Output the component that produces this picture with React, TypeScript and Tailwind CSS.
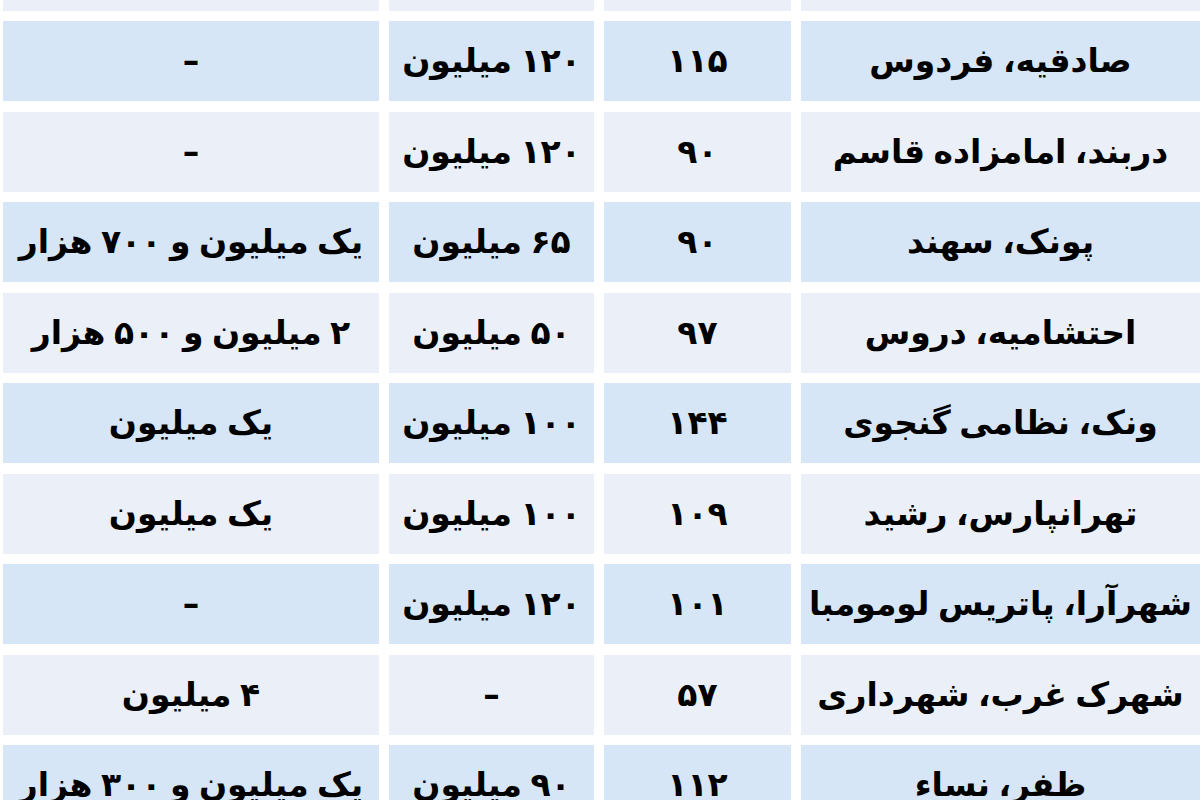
import React from 'react';

type Row = { place: string; area: string; deposit: string; rent: string };

const rows: Row[] = [
    { place: '', area: '', deposit: '', rent: '' },
    { place: 'صادقیه، فردوس', area: '۱۱۵', deposit: '۱۲۰ میلیون', rent: '–' },
    { place: 'دربند، امامزاده قاسم', area: '۹۰', deposit: '۱۲۰ میلیون', rent: '–' },
    { place: 'پونک، سهند', area: '۹۰', deposit: '۶۵ میلیون', rent: 'یک میلیون و ۷۰۰ هزار' },
    { place: 'احتشامیه، دروس', area: '۹۷', deposit: '۵۰ میلیون', rent: '۲ میلیون و ۵۰۰ هزار' },
    { place: 'ونک، نظامی گنجوی', area: '۱۴۴', deposit: '۱۰۰ میلیون', rent: 'یک میلیون' },
    { place: 'تهرانپارس، رشید', area: '۱۰۹', deposit: '۱۰۰ میلیون', rent: 'یک میلیون' },
    { place: 'شهرآرا، پاتریس لومومبا', area: '۱۰۱', deposit: '۱۲۰ میلیون', rent: '–' },
    { place: 'شهرک غرب، شهرداری', area: '۵۷', deposit: '–', rent: '۴ میلیون' },
    { place: 'ظفر، نساء', area: '۱۱۲', deposit: '۹۰ میلیون', rent: 'یک میلیون و ۳۰۰ هزار' },
];

function Cell({ text, blue }: { text: string; blue: boolean }) {
    return (
        <div className={`h-[80px] flex items-center justify-center whitespace-nowrap ${blue ? 'bg-[#d6e6f6]' : 'bg-[#ebf0f8]'}`}>
            {text}
        </div>
    );
}

export default function App() {
    return (
        <div className="w-[1200px] h-[800px] overflow-hidden bg-white">
            <div
                dir="rtl"
                className="mt-[-69.5px] grid grid-cols-[399px_187px_205px_376px] gap-x-[10px] gap-y-[10.5px] pl-[3px] text-[33px] font-bold text-black [word-spacing:-3px]"
                style={{ fontFamily: '"DejaVu Sans", sans-serif' }}
            >
                {rows.map((r, i) => {
                    const blue = i % 2 === 1;
                    return (
                        <React.Fragment key={i}>
                            <Cell text={r.place} blue={blue} />
                            <Cell text={r.area} blue={blue} />
                            <Cell text={r.deposit} blue={blue} />
                            <Cell text={r.rent} blue={blue} />
                        </React.Fragment>
                    );
                })}
            </div>
        </div>
    );
}
